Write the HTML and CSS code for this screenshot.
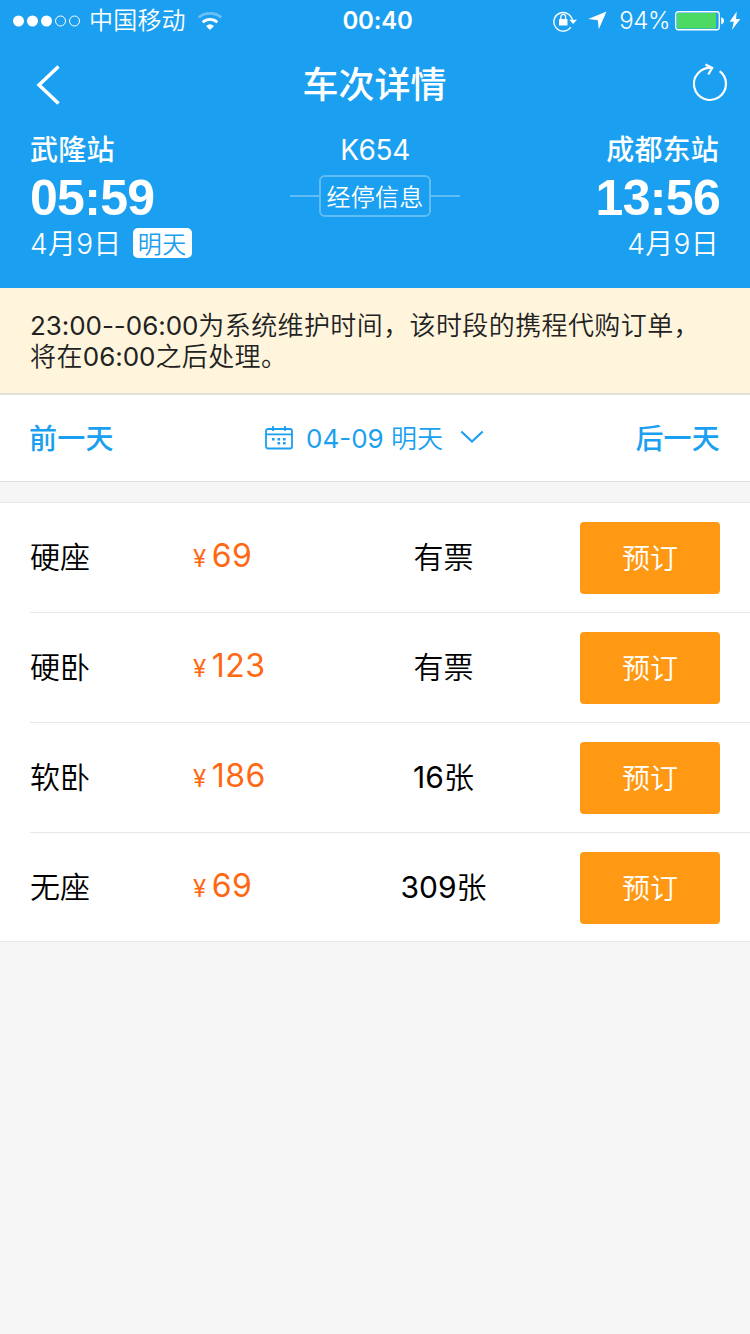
FILE: index.html
```html
<!DOCTYPE html>
<html lang="zh-CN">
<head>
<meta charset="utf-8">
<title>车次详情</title>
<link rel="stylesheet" href="styles.css">
</head>
<body>
<header class="header">
  <div class="status">
    <div class="status-left">
      <svg class="signal" width="68" height="12" viewBox="0 0 68 12" fill="#fff"><circle cx="5.500" cy="6" r="5.500"/><circle cx="19.500" cy="6" r="5.500"/><circle cx="33.500" cy="6" r="5.500"/><g fill="none" stroke="#fff"><circle cx="47.500" cy="6" r="5"/><circle cx="61.500" cy="6" r="5"/></g></svg>
      <span class="carrier">中国移动</span>
      <svg class="wifi" width="24" height="19" viewBox="0 0 24 19" fill="none" stroke="#fff" stroke-width="2.800"><path d="M.9 6.400Q5.200 2.300 12 2.300T23.100 6.400" opacity=".35"/><path d="M4.700 11.200Q7.800 8.300 12 8.300T19.300 11.200"/><path d="M8 15Q12 11.400 16 15L12 19Z" fill="#fff" stroke="none"/></svg>
    </div>
    <span class="clock">00:40</span>
    <div class="status-right">
      <svg width="24" height="22" viewBox="0 0 24 22"><path d="M17.800 17.200A9.300 9.300 0 1 1 19.300 10" fill="none" stroke="#fff" stroke-width="1.400"/><path d="M16.300 9.700H24L20.100 13.900Z" fill="#fff"/><rect x="6" y="9" width="8.500" height="6.500" rx=".6" fill="#fff"/><path d="M7.800 10V7a2.400 2.600 0 0 1 4.800 0V10" fill="none" stroke="#fff" stroke-width="1.300"/></svg>
      <svg class="arrow" width="19" height="19" viewBox="0 0 19 19"><path d="M18.500.5L10.800 18.300L9.800 9.200L.3 8Z" fill="#fff"/></svg>
      <span class="percent">94%</span>
      <svg class="battery" width="50" height="20" viewBox="0 0 50 20"><rect x=".75" y=".75" width="43.500" height="18" rx="2.500" fill="none" stroke="#fff" stroke-width="1.300"/><rect x="2" y="2" width="39" height="15.500" rx="1" fill="#4cd964"/><path d="M46.200 6.200q2.800.8 2.800 3.600t-2.800 3.600Z" fill="#fff"/></svg>
      <svg class="bolt" width="12" height="20" viewBox="0 0 12 20"><path d="M7.800.5L.5 10.800H4.800L2.900 19L11.300 8H7Z" fill="#fff"/></svg>
    </div>
  </div>
  <div class="nav">
    <svg class="back" width="25" height="42" viewBox="0 0 25 42"><path d="M22.500 2.500L3 21L22.500 39.500" fill="none" stroke="#fff" stroke-width="3.500"/></svg>
    <h1 class="title">车次详情</h1>
    <svg class="refresh" width="36" height="40" viewBox="0 0 36 40" fill="none" stroke="#fff" stroke-width="2.200"><path d="M26.700 8.200A16 16 0 1 1 18.800 5"/><path d="M12.500 1.500L19.200 5L15.300 11.300"/></svg>
  </div>
  <div class="trip">
    <div class="end">
      <div class="station">武隆站</div>
      <div class="time">05:59</div>
      <div class="date"><span>4月9日</span><span class="tag">明天</span></div>
    </div>
    <div class="middle">
      <div class="train">K654</div>
      <div class="stops"><i class="line"></i><span class="stops-label">经停信息</span><i class="line"></i></div>
    </div>
    <div class="end end-right">
      <div class="station">成都东站</div>
      <div class="time">13:56</div>
      <div class="date"><span>4月9日</span></div>
    </div>
  </div>
</header>
<div class="notice"><span class="hours">23:00--06:00</span>为系统维护时间，该时段的携程代购订单，<br>将在<span class="hours">06:00</span>之后处理。</div>
<div class="days">
  <span class="day">前一天</span>
  <div class="current">
    <svg width="28" height="24" viewBox="0 0 28 24" fill="none" stroke="#1b9ff0" stroke-width="1.800"><rect x="1" y="3" width="26" height="19.500" rx="2"/><path d="M1 8.300H27M8 0V5M20 0V5"/><path d="M7 13.200h2.600M12.500 13.200h2.600M18 13.200h2.600M12.500 17.200h2.600M18 17.200h2.600" stroke-width="2.400"/></svg>
    <span class="current-text"><span class="num">04-09</span> 明天</span>
    <svg class="chevron" width="24" height="14" viewBox="0 0 24 14"><path d="M1.300 1.500L12 11.500L22.700 1.500" fill="none" stroke="#1b9ff0" stroke-width="2.200"/></svg>
  </div>
  <span class="day">后一天</span>
</div>
<main class="seats">
  <div class="seat"><span class="name">硬座</span><span class="price"><small>¥</small>69</span><span class="left">有票</span><button class="book">预订</button></div>
  <div class="seat"><span class="name">硬卧</span><span class="price"><small>¥</small>123</span><span class="left">有票</span><button class="book">预订</button></div>
  <div class="seat"><span class="name">软卧</span><span class="price"><small>¥</small>186</span><span class="left"><span class="num">16</span>张</span><button class="book">预订</button></div>
  <div class="seat"><span class="name">无座</span><span class="price"><small>¥</small>69</span><span class="left"><span class="num">309</span>张</span><button class="book">预订</button></div>
</main>
</body>
</html>
```
FILE: styles.css
```css
* { box-sizing: border-box; }
body {
  margin: 0;
  min-height: 1334px;
  background: #f6f6f6;
  font-family: Inter, "Noto Sans CJK SC", sans-serif;
  font-weight: 350;
  color: #000;
  white-space: nowrap;
}
svg { display: block; flex: none; }
.num { font-weight: 400; }
.header { height: 288px; background: #1b9ff0; color: #fff; }

.status {
  display: grid;
  grid-template-columns: 1fr auto 1fr;
  height: 41px;
  padding: 0 9px 0 13px;
  font-size: 24px;
  line-height: 42px;
}
.status-left, .status-right { display: flex; align-items: center; height: 41px; }
.status-right { justify-content: flex-end; }
.carrier { margin-left: 8px; letter-spacing: .2px; }
.wifi { margin-left: 12px; }
.clock { margin-left: 1px; font-weight: 600; letter-spacing: -.2px; }
.arrow { margin-left: 11px; }
.percent { margin-left: 12px; letter-spacing: -.4px; }
.battery { margin-left: 5px; }
.bolt { margin-left: 4px; }

.nav {
  display: grid;
  grid-template-columns: 1fr auto 1fr;
  align-items: center;
  height: 87px;
  padding: 0 21px 0 36px;
}
.title { height: 87px; margin: 0 16px 0 0; font-size: 36px; font-weight: 500; line-height: 89px; }
.refresh { margin-bottom: 4px; justify-self: end; }

.trip { display: flex; justify-content: space-between; padding: 0 30px; }
.end { width: 250px; }
.end-right { display: flex; flex-direction: column; align-items: flex-end; }
.station { height: 42px; font-size: 28px; font-weight: 500; line-height: 44px; letter-spacing: .2px; }
.end-right .station { margin-right: 1px; }
.time {
  height: 56px;
  font-family: "Liberation Sans", Arial, sans-serif;
  font-size: 50px;
  font-weight: 700;
  line-height: 56px;
  letter-spacing: -.7px;
}
.date {
  display: flex;
  align-items: center;
  height: 34px;
  font-size: 28px;
  line-height: 34px;
  letter-spacing: .3px;
}
.date span:first-child { padding-top: 2px; }
.end-right .date { margin-right: 1px; }
.tag {
  width: 59px;
  height: 30px;
  margin-left: 11px;
  border-radius: 5px;
  background: #fff;
  color: #1b9ff0;
  font-size: 24px;
  line-height: 33px;
  text-align: center;
}
.middle { width: 170px; text-align: center; }
.train { height: 47px; font-size: 28px; font-weight: 400; line-height: 44px; letter-spacing: -.4px; }
.stops { display: flex; align-items: center; }
.line { flex: 1; height: 2px; background: #60bcf5; }
.stops-label {
  width: 112px;
  height: 42px;
  border: 2px solid #60bcf5;
  border-radius: 6px;
  font-size: 24px;
  line-height: 41px;
  letter-spacing: .2px;
}

.notice {
  height: 107px;
  padding: 22px 30px 0;
  border-bottom: 2px solid #e2e0d8;
  background: #fff5dd;
  color: #222;
  font-size: 26px;
  line-height: 31px;
  letter-spacing: .4px;
}
.hours { font-weight: 400; letter-spacing: -.05px; }

.days {
  display: flex;
  justify-content: space-between;
  align-items: center;
  height: 87px;
  padding: 0 30px 0 29px;
  border-bottom: 1px solid #ddd;
  background: #fff;
  color: #1b9ff0;
}
.day { height: 86px; font-size: 28px; font-weight: 500; line-height: 89px; letter-spacing: .2px; }
.current { display: flex; align-items: center; height: 24px; }
.current-text { margin: 0 17px 0 13px; padding-top: 1px; font-size: 26px; line-height: 30px; }
.chevron { margin-bottom: 2px; }

.seats {
  height: 440px;
  margin-top: 20px;
  border: solid #e8e8e8;
  border-width: 1px 0;
  background: #fff;
}
.seat {
  display: grid;
  grid-template-columns: 162px 171px 161px 1fr;
  align-items: center;
  height: 110px;
  margin-left: 30px;
  padding-right: 30px;
  border-bottom: 1px solid #e8e8e8;
  font-size: 30px;
  line-height: 40px;
}
.seat:last-child { height: 109px; border-bottom: 0; }
.name, .left { margin-top: -1px; }
.price { padding-left: 1px; color: #ff6813; font-size: 32px; font-weight: 400; letter-spacing: .5px; }
.price small { margin-right: 5px; font-size: 24px; }
.left { text-align: center; }
.book {
  width: 140px;
  height: 72px;
  justify-self: end;
  padding: 0;
  border: 0;
  border-radius: 4px;
  background: #ff9913;
  color: #fff;
  font: 350 28px/74px Inter, "Noto Sans CJK SC", sans-serif;
}
```
